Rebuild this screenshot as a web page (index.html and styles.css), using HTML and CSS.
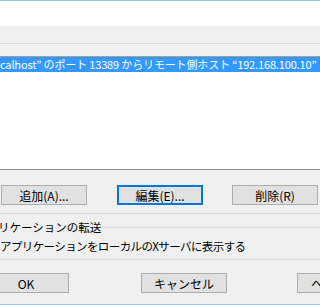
FILE: index.html
```html
<!DOCTYPE html>
<html>
<head>
    <meta charset="utf-8" />
    <title>SSH 転送</title>
    <link rel="stylesheet" href="styles.css">
</head>
<body>
    <div class="window">
        <div class="blank"></div>

        <div class="band top"></div>
        <div class="band"></div>

        <div class="list">
            <div class="row selected">calhost” のポート 13389 からリモート側ホスト “192.168.100.10”</div>
        </div>

        <div class="actions">
            <button class="btn">追加(A)...</button>
            <button class="btn focus">編集(E)...</button>
            <button class="btn">削除(R)</button>
        </div>

        <div class="group-end"></div>

        <fieldset class="group">
            <legend>リケーションの転送</legend>
            <div class="option">アプリケーションをローカルのXサーバに表示する</div>
        </fieldset>

        <div class="footer">
            <button class="btn ok">OK</button>
            <button class="btn cancel">キャンセル</button>
            <button class="btn help">ヘルプ(H)</button>
        </div>
    </div>
</body>
</html>
```

FILE: styles.css
```css
* {
    box-sizing: border-box;
}

html, body {
    margin: 0;
    padding: 0;
}

body {
    width: 320px;
    height: 305px;
    overflow: hidden;
    background: #f0f0f0;
    font-family: "Noto Sans CJK JP", "Liberation Sans", sans-serif;
    font-size: 11px;
    color: #000;
}

.window {
    height: 305px;
    border-top: 1px solid #99c6ee;
    border-bottom: 1px solid #99c6ee;
    overflow: hidden;
}

.blank {
    height: 25px;
    background: #fff;
}

.band {
    height: 12px;
    background: #f0f0f0;
}

.band.top {
    height: 18px;
    border-bottom: 1px solid #dadada;
}

.list {
    height: 114px;
    background: #fff;
    border-top: 1px solid #a0a0a0;
    border-bottom: 1px solid #8c8c8c;
    overflow: hidden;
}

.row {
    height: 15px;
    line-height: 15px;
    white-space: nowrap;
    letter-spacing: -0.15px;
}

.row.selected {
    background: #3399ff;
    color: #fff;
}

.actions {
    display: flex;
    margin-top: 15px;
    padding-left: 1px;
}

.btn {
    display: block;
    flex-shrink: 0;
    width: 86px;
    height: 20px;
    padding: 0;
    font: inherit;
    font-size: 12px;
    line-height: 17px;
    white-space: nowrap;
    color: #000;
    background: #e1e1e1;
    border: 1px solid #adadad;
    border-radius: 0;
    text-align: center;
}

.actions .btn + .btn {
    margin-left: 30px;
}

.actions .btn:last-child {
    margin-left: 29px;
}

.btn.focus {
    border: 2px solid #0078d7;
    line-height: 15px;
}

.group-end {
    margin-top: 8px;
    border-bottom: 1px solid #dcdcdc;
}

.group {
    margin: 6px 0 0 -20px;
    padding: 0 0 6px 0;
    border: 0;
    border-top: 1px solid #dcdcdc;
    border-bottom: 1px solid #dcdcdc;
    font-size: 11.5px;
}

.group legend {
    padding: 0 2px 0 0;
    margin-left: 18px;
    line-height: 14px;
}

.option {
    margin-left: 20px;
    margin-top: 5px;
    line-height: 14px;
    letter-spacing: -0.6px;
}

.footer {
    display: flex;
    margin-top: 13px;
    margin-left: -17px;
}

.footer .btn.cancel {
    margin-left: 72px;
}

.footer .btn.help {
    margin-left: 70px;
    text-align: left;
    padding-left: 13px;
}
```
